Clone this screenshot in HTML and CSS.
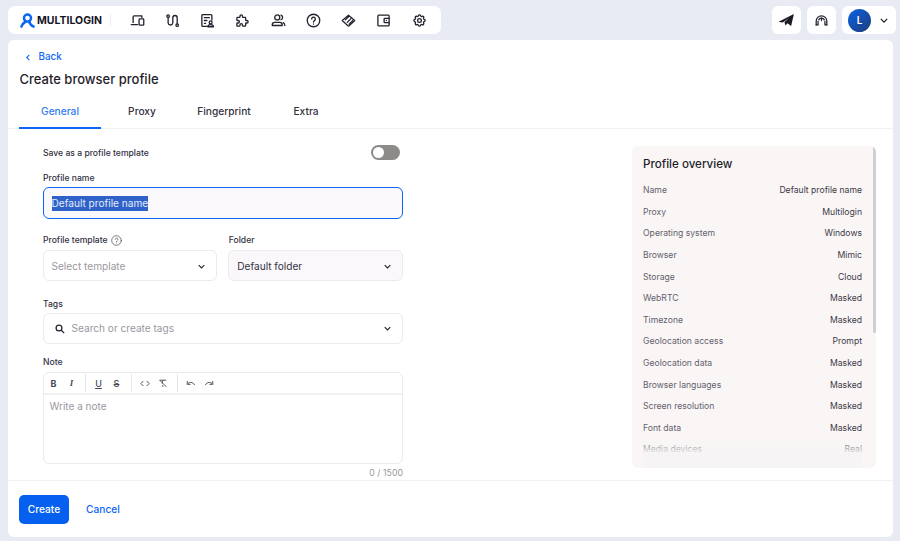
FILE: index.html
```html
<!DOCTYPE html>
<html lang="en">
<head>
<meta charset="utf-8">
<title>Create browser profile</title>
<link rel="stylesheet" href="styles.css">
</head>
<body>
<header class="topbar">
  <nav class="nav">
    <div class="logo">
      <svg class="logo-mark" viewBox="0 0 16 16" fill="none"><circle cx="8" cy="5.400" r="3.800" stroke="#0b66f5" stroke-width="2.600"/><path d="M1.600 14.400c.6-2.400 2.200-3.800 4.200-5.200M14.400 14.400c-2-.6-3.600-2.600-4.800-5.400" stroke="#0b66f5" stroke-width="2.800" stroke-linecap="round"/></svg>
      <span class="logo-text">MULTILOGIN</span>
    </div>
    <span class="nav-sep"></span>
    <div class="nav-icons">
      <span class="nav-icon"><svg viewBox="0 0 24 24"><path d="M5 15V6a1.500 1.500 0 0 1 1.500-1.500H19V7"/><path d="M2 18.500h10"/><rect x="14.500" y="9.500" width="7.500" height="10" rx="1.200"/></svg></span>
      <span class="nav-icon"><svg viewBox="0 0 24 24"><circle cx="5" cy="5" r="2"/><circle cx="19.500" cy="19.500" r="2"/><path d="M5 7v9a3.800 3.800 0 0 0 7.500 0V7.500a3.500 3.500 0 0 1 7 0v10"/></svg></span>
      <span class="nav-icon"><svg viewBox="0 0 24 24"><path d="M11 21.500H4.500a1.500 1.500 0 0 1-1.500-1.500V4a1.500 1.500 0 0 1 1.500-1.500h13A1.500 1.500 0 0 1 19 4v7"/><path d="M7 7.500h8M7 12h4M7 16.500h2"/><circle cx="17" cy="15" r="2.300"/><path d="M12.500 22c0-2.500 2-3.500 4.500-3.500s4.500 1 4.500 3.500z"/></svg></span>
      <span class="nav-icon"><svg viewBox="0 0 24 24"><path d="M4 7h3a1 1 0 0 0 1-1v-1a2 2 0 0 1 4 0v1a1 1 0 0 0 1 1h3a1 1 0 0 1 1 1v3a1 1 0 0 0 1 1h1a2 2 0 0 1 0 4h-1a1 1 0 0 0-1 1v3a1 1 0 0 1-1 1h-3a1 1 0 0 1-1-1v-1a2 2 0 0 0-4 0v1a1 1 0 0 1-1 1H4a1 1 0 0 1-1-1v-3a1 1 0 0 1 1-1h1a2 2 0 0 0 0-4H4a1 1 0 0 1-1-1V8a1 1 0 0 1 1-1"/></svg></span>
      <span class="nav-icon"><svg viewBox="0 0 24 24"><circle cx="10" cy="7" r="4"/><path d="M2 20v-1a4 4 0 0 1 4-4h8a4 4 0 0 1 4 4v1z"/><path d="M16 3.300a4 4 0 0 1 0 7.500"/><path d="M22 20v-1a4 4 0 0 0-2.500-3.700"/></svg></span>
      <span class="nav-icon"><svg viewBox="0 0 24 24"><circle cx="12" cy="12" r="10"/><path d="M9 9.500a3 3 0 1 1 4.500 2.600c-1 .6-1.500 1.200-1.500 2.400"/><path d="M12 17.500v.1"/></svg></span>
      <span class="nav-icon"><svg viewBox="0 0 24 24"><path d="M12 3.500 22 12l-9 8.500a1.500 1.500 0 0 1-2 0L2 12z"/><path d="M7 11l5-5M10 15l6-6M13 18l6-6"/></svg></span>
      <span class="nav-icon"><svg viewBox="0 0 24 24"><rect x="3" y="3.500" width="18" height="17" rx="1.500"/><path d="M21 8.500h-7a1 1 0 0 0-1 1v5a1 1 0 0 0 1 1h7"/><path d="M16.500 12v.1"/></svg></span>
      <span class="nav-icon"><svg viewBox="0 0 24 24"><path d="M10.325 4.317c.426-1.756 2.924-1.756 3.350 0a1.724 1.724 0 0 0 2.573 1.066c1.543-.94 3.310.826 2.370 2.370a1.724 1.724 0 0 0 1.065 2.572c1.756.426 1.756 2.924 0 3.350a1.724 1.724 0 0 0-1.066 2.573c.94 1.543-.826 3.310-2.370 2.370a1.724 1.724 0 0 0-2.572 1.065c-.426 1.756-2.924 1.756-3.350 0a1.724 1.724 0 0 0-2.573-1.066c-1.543.94-3.310-.826-2.370-2.370a1.724 1.724 0 0 0-1.065-2.572c-1.756-.426-1.756-2.924 0-3.350a1.724 1.724 0 0 0 1.066-2.573c-.94-1.543.826-3.310 2.370-2.370c1 .608 2.296.07 2.572-1.065z"/><circle cx="12" cy="12" r="3"/></svg></span>
    </div>
  </nav>
  <div class="top-actions">
    <span class="top-btn"><svg class="plane" viewBox="0 0 16 13"><path d="M0 8.200 15.400.2c.3-.1.500.1.500.4L13.100 12.600c-.1.300-.4.400-.6.200L9.200 10l-2.400 2.400-1-3.600L11 4 3.900 9.100.2 8.600c-.3 0-.4-.3-.2-.4z"/></svg></span>
    <span class="top-btn"><svg class="support" viewBox="0 0 24 24"><path d="M3.500 19v-6a8.500 8.500 0 0 1 17 0v6"/><path d="M3.500 19h3v-5.500"/><path d="M20.500 19h-3v-5.500"/><path d="M7.500 11a5 5 0 0 1 9 0"/><path d="M12 8v4"/></svg></span>
    <span class="top-btn account">
      <span class="avatar">L</span>
      <svg class="chev-sm" viewBox="0 0 10 6"><path d="M1 1l4 4 4-4"/></svg>
    </span>
  </div>
</header>

<main class="card">
  <div class="head">
    <a class="back"><svg class="back-chev" viewBox="0 0 6 10"><path d="M5 1 1 5l4 4"/></svg>Back</a>
    <h1 class="title">Create browser profile</h1>
  </div>
  <div class="tabs">
    <span class="tab active">General</span>
    <span class="tab">Proxy</span>
    <span class="tab">Fingerprint</span>
    <span class="tab">Extra</span>
  </div>

  <div class="content">
    <form class="form">
      <div class="switch-row">
        <span class="label">Save as a profile template</span>
        <span class="toggle"><span class="knob"></span></span>
      </div>

      <div class="label name-label">Profile name</div>
      <div class="input focused"><span class="selected">Default profile name</span></div>

      <div class="two-col">
        <div class="col">
          <div class="label label-help">Profile template
            <svg class="help" viewBox="0 0 24 24"><circle cx="12" cy="12" r="10.500"/><path d="M9 9.500a3 3 0 1 1 4.500 2.600c-1 .6-1.500 1.200-1.500 2.400"/><path d="M12 17.500v.1"/></svg>
          </div>
          <div class="input select"><span class="placeholder">Select template</span><svg class="chev" viewBox="0 0 10 6"><path d="M1 1l4 4 4-4"/></svg></div>
        </div>
        <div class="col">
          <div class="label">Folder</div>
          <div class="input select filled"><span>Default folder</span><svg class="chev" viewBox="0 0 10 6"><path d="M1 1l4 4 4-4"/></svg></div>
        </div>
      </div>

      <div class="label tags-label">Tags</div>
      <div class="input select tags">
        <svg class="search" viewBox="0 0 12 12"><circle cx="4.800" cy="4.800" r="3.500"/><path d="M7.500 7.500 11 11"/></svg>
        <span class="placeholder grow">Search or create tags</span>
        <svg class="chev" viewBox="0 0 10 6"><path d="M1 1l4 4 4-4"/></svg>
      </div>

      <div class="label note-label">Note</div>
      <div class="editor">
        <div class="toolbar">
          <span class="tool-group first">
            <span class="tool tool-b">B</span>
            <span class="tool tool-i">I</span>
          </span>
          <span class="tool-group">
            <span class="tool tool-u">U</span>
            <span class="tool tool-s">S</span>
          </span>
          <span class="tool-group third">
            <svg class="tool-svg" viewBox="0 0 12 10"><path d="M4 2 1 5l3 3M8 2l3 3-3 3"/></svg>
            <svg class="tool-svg" viewBox="0 0 12 10"><path d="M2 1h8M6 1 5 5M2 1l8 8M6 9 5.500 7"/></svg>
          </span>
          <span class="tool-group last">
            <svg class="tool-svg" viewBox="0 0 12 10"><path d="M1.500 2v4h4M1.500 6c2-3 6.500-3.500 9 1"/></svg>
            <svg class="tool-svg" viewBox="0 0 12 10"><path d="M10.500 2v4h-4M10.500 6c-2-3-6.500-3.500-9 1"/></svg>
          </span>
        </div>
        <div class="editor-body">Write a note</div>
      </div>
      <div class="counter">0 / 1500</div>
    </form>

    <aside class="overview">
      <h2 class="overview-title">Profile overview</h2>
      <dl class="rows">
        <div class="row"><dt>Name</dt><dd>Default profile name</dd></div>
        <div class="row"><dt>Proxy</dt><dd>Multilogin</dd></div>
        <div class="row"><dt>Operating system</dt><dd>Windows</dd></div>
        <div class="row"><dt>Browser</dt><dd>Mimic</dd></div>
        <div class="row"><dt>Storage</dt><dd>Cloud</dd></div>
        <div class="row"><dt>WebRTC</dt><dd>Masked</dd></div>
        <div class="row"><dt>Timezone</dt><dd>Masked</dd></div>
        <div class="row"><dt>Geolocation access</dt><dd>Prompt</dd></div>
        <div class="row"><dt>Geolocation data</dt><dd>Masked</dd></div>
        <div class="row"><dt>Browser languages</dt><dd>Masked</dd></div>
        <div class="row"><dt>Screen resolution</dt><dd>Masked</dd></div>
        <div class="row"><dt>Font data</dt><dd>Masked</dd></div>
        <div class="row"><dt>Media devices</dt><dd>Real</dd></div>
      </dl>
      <div class="fade"></div>
      <div class="scrollbar"></div>
    </aside>
  </div>

  <footer class="footer">
    <button class="create" type="button">Create</button>
    <a class="cancel">Cancel</a>
  </footer>
</main>
</body>
</html>
```

FILE: styles.css
```css
* { box-sizing: border-box; }
html, body { margin: 0; height: 541px; overflow: hidden; }
body {
  background: #e8ebf4;
  padding: 6px 7px 4px 8px;
  font-family: Inter, "Liberation Sans", sans-serif;
  color: #1f1d2b;
  display: flex;
  flex-direction: column;
  gap: 6px;
}

/* top bar */
.topbar { display: flex; justify-content: space-between; height: 28px; flex: none; margin-right: -3px; }
.nav {
  width: 433px;
  background: #fff;
  border-radius: 7px;
  display: flex;
  align-items: center;
  padding-left: 12px;
}
.logo { display: flex; align-items: center; gap: 2px; width: 79px; }
.logo-mark { width: 15px; height: 15px; flex: none; }
.logo-text { font-size: 10.500px; font-weight: 700; color: #16151f; }
.nav-sep { width: 1px; height: 12px; background: #eceef2; margin: 0 0 0 11px; }
.nav-icons { display: flex; margin-left: 8.500px; }
.nav-icon { width: 35.250px; display: flex; justify-content: center; }
.nav-icon svg {
  width: 15px; height: 15px;
  fill: none; stroke: #23222f; stroke-width: 2.100; stroke-linecap: round; stroke-linejoin: round;
}
.top-actions { display: flex; gap: 6px; }
.top-btn {
  height: 28px; width: 29px;
  background: #fff; border-radius: 6px;
  display: flex; align-items: center; justify-content: center;
}
.plane { width: 15px; height: 12px; fill: #1b1a26; }
.support { width: 15px; height: 15px; fill: none; stroke: #23222f; stroke-width: 2; stroke-linecap: round; stroke-linejoin: round; }
.account { width: 54px; justify-content: flex-start; padding-left: 6px; gap: 9px; }
.avatar {
  width: 23px; height: 23px; border-radius: 50%;
  background: linear-gradient(135deg, #0b63e6, #1f3c78);
  color: #fff; font-size: 10px; font-weight: 600;
  display: flex; align-items: center; justify-content: center;
}
.chev-sm { width: 8px; height: 5px; fill: none; stroke: #23222f; stroke-width: 1.600; }

/* card */
.card {
  flex: 1;
  background: #fff;
  border-radius: 6px;
  display: flex;
  flex-direction: column;
  min-height: 0;
}
.head { padding: 11px 11.500px 0; height: 64px; flex: none; }
.back {
  display: flex; align-items: center; gap: 9px;
  color: #0b66f5; font-size: 9.800px; font-weight: 500; line-height: 12px;
  padding-left: 6px;
}
.back-chev { width: 4px; height: 7px; fill: none; stroke: #0b66f5; stroke-width: 1.600; }
.title { margin: 8px 0 0; font-size: 13px; font-weight: 500; line-height: 17px; color: #1f1d2b; }

.tabs {
  display: grid;
  grid-template-columns: repeat(4, 82px);
  padding-left: 11px;
  height: 25px;
  flex: none;
  border-bottom: 1px solid #f0f1f4;
}
.tab {
  font-size: 10.200px; font-weight: 500; color: #33313f;
  text-align: center; line-height: 13px; padding-top: 1px;
}
.tab.active { color: #2f7bf0; border-bottom: 2px solid #0b66f5; height: 25px; }

.content {
  flex: 1;
  display: flex;
  justify-content: space-between;
  padding: 0 17px 0 34.500px;
  min-height: 0;
  overflow: hidden;
}

/* form */
.form { width: 360.500px; flex: none; }
.label { font-size: 8.600px; font-weight: 500; line-height: 12px; color: #33313f; }
.switch-row { display: flex; justify-content: space-between; align-items: center; height: 15px; margin-top: 16px; padding: 0 3px 0 .5px; }
.toggle { width: 29px; height: 15px; border-radius: 8px; background: #8d8a8a; padding: 2px; display: block; }
.knob { display: block; width: 11px; height: 11px; border-radius: 50%; background: #fff; }
.name-label { margin: 12px 0 3px; padding-left: .5px; }
.input {
  height: 31px;
  border: 1px solid #ebeaed;
  border-radius: 6px;
  background: #fff;
  font-size: 10.100px;
  line-height: 13px;
  display: flex;
  align-items: center;
  padding: 1px 8px 0;
  color: #33313f;
}
.input.focused { height: 32px; border: 1.500px solid #0b66f5; background: #fbf8fb; padding-top: 0; }
.selected { background: #2f62c8; color: #e4ecfb; line-height: 15px; }
.two-col { display: flex; gap: 11px; margin-top: 15px; }
.col { flex: 1; min-width: 0; }
.col .label { margin-bottom: 4px; padding-left: .5px; }
.label-help { display: flex; align-items: center; gap: 3px; }
.help { width: 11px; height: 11px; fill: none; stroke: #4e4c58; stroke-width: 1.600; stroke-linecap: round; }
.select { justify-content: space-between; padding-right: 11px; }
.filled { background: #fbf8fb; color: #33313f; }
.placeholder { color: #9a98a0; }
.chev { width: 7px; height: 5px; fill: none; stroke: #23222f; stroke-width: 1.600; flex: none; }
.tags-label { margin: 17px 0 3px; padding-left: .5px; }
.tags { padding: 0 11px; gap: 7px; }
.grow { flex: 1; }
.search { width: 10px; height: 10px; fill: none; stroke: #23222f; stroke-width: 1.500; flex: none; }
.note-label { margin: 12px 0 4px; padding-left: .5px; }
.editor { height: 92px; border: 1px solid #ebeaed; border-radius: 6px; overflow: hidden; }
.toolbar { height: 22px; border-bottom: 2px solid #f0eff1; display: flex; }
.tool-group { display: flex; align-items: center; gap: 8px; padding: 0 9.500px 0 8px; border-right: 1px solid #e6e5e9; height: 18px; margin-top: 1px; }
.tool-group.first { padding-left: 5px; padding-right: 8px; }
.tool-group.third { padding-right: 9px; }
.tool-group.last { border-right: 0; }
.tool { width: 10px; text-align: center; font-size: 9px; font-weight: 700; line-height: 11px; color: #4a4855; }
.tool-i { font-style: italic; font-family: "Liberation Serif", serif; }
.tool-u { text-decoration: underline; font-weight: 500; }
.tool-s { text-decoration: line-through; font-weight: 500; }
.tool-svg { width: 10px; height: 9px; fill: none; stroke: #4a4855; stroke-width: 1.100; }
.editor-body { padding: 5px 6px; font-size: 10px; line-height: 13px; color: #9a98a0; }
.counter { margin-top: 3px; text-align: right; font-size: 8.800px; line-height: 12px; color: #9a98a0; }

/* overview */
.overview {
  position: relative;
  width: 244px;
  height: 322px;
  margin-top: 17px;
  background: #faf6f6;
  border-radius: 6px;
  padding: 11px 14px 0 11px;
  overflow: hidden;
  flex: none;
}
.overview-title { margin: 0 0 7.500px; font-size: 11.600px; font-weight: 500; line-height: 15px; color: #1f1d2b; }
.rows { margin: 0; }
.row { display: flex; justify-content: space-between; height: 21.600px; align-items: center; font-size: 8.650px; }
.row dt { color: #63616d; }
.row dd { margin: 0; color: #3c3a47; }
.fade { position: absolute; left: 11px; right: 14px; bottom: 0; height: 30px; background: linear-gradient(rgba(250,246,246,0), rgba(246,244,244,.9) 50%, #f6f4f4); }
.scrollbar { position: absolute; right: 0; top: 0; width: 3px; height: 187px; background: #cfcfd4; border-radius: 2px; }

/* footer */
.footer {
  height: 57px;
  flex: none;
  border-top: 1px solid #f0f1f4;
  display: flex;
  align-items: flex-start;
  padding: 14px 0 0 11px;
}
.create {
  width: 50px; height: 29px;
  border: 0; border-radius: 5px;
  background: #0560f0; color: #fff;
  font: 500 10.200px/13px Inter, "Liberation Sans", sans-serif;
  padding: 0;
}
.cancel { margin-left: 17px; color: #0b66f5; font-size: 10.200px; font-weight: 500; line-height: 29px; }
```
